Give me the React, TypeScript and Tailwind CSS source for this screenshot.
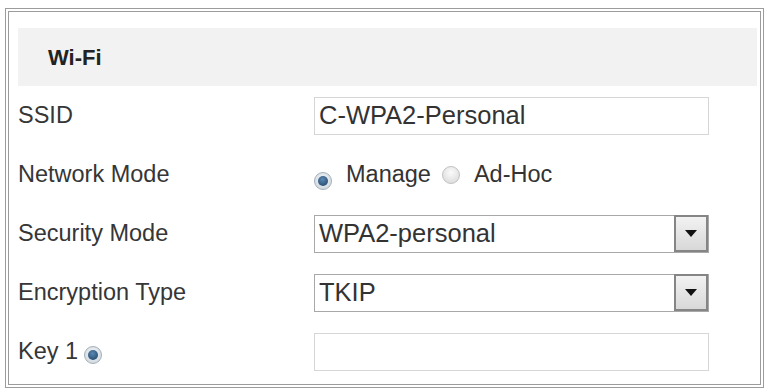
import React from "react";

// Radio dot as drawn by the old web UI skin
const Radio = ({ checked }: { checked?: boolean }) => (
  <span
    className={`inline-flex items-center justify-center w-[18px] h-[18px] rounded-full border ${
      checked
        ? "border-[#a3afba] bg-[radial-gradient(circle_at_50%_40%,#f4f6f8,#c9d2da)]"
        : "border-[#c2c2c2] bg-[radial-gradient(circle_at_50%_35%,#fbfbfb,#d6d6d6)]"
    }`}
  >
    {checked && (
      <span className="w-[10px] h-[10px] rounded-full bg-[radial-gradient(circle_at_45%_35%,#5a88b3,#1d3f60)]" />
    )}
  </span>
);

const TextBox = ({ value }: { value?: string }) => (
  <div className="w-[395px] h-[38px] border border-[#d6d6d6] bg-white flex items-center pl-[4px] text-[25.5px] text-[#333] leading-none">
    {value}
  </div>
);

const SelectBox = ({ value }: { value: string }) => (
  <div className="w-[395px] h-[38px] border border-[#a8a8a8] bg-white flex items-center text-[25.5px] text-[#333] leading-none">
    <span className="flex-1 pl-[4px]">{value}</span>
    <span className="w-[34px] h-[37px] border-[2px] border-[#858585] bg-[linear-gradient(#f2f2f2,#d8d8d8)] flex items-center justify-center">
      <svg width="12" height="7" viewBox="0 0 12 7">
        <path d="M0 0 L12 0 L6 7 Z" fill="#111" />
      </svg>
    </span>
  </div>
);

const Row = ({ label, children }: { label: React.ReactNode; children: React.ReactNode }) => (
  <div className="h-[59px] flex items-center">
    <div className="w-[296px] text-[23.5px] text-[#363636] leading-none flex items-center">{label}</div>
    {children}
  </div>
);

export default function App() {
  return (
    <div
      className="w-[768px] h-[392px] bg-white pl-[5px] pt-[8px] pr-[4px] pb-[4px]"
      style={{ fontFamily: '"Liberation Sans", Arial, sans-serif' }}
    >
      <div className="h-full border-[4px] border-double border-[#9c9c9c] pl-[9px] pr-[3px] pt-[16px]">
        <div className="h-[58px] bg-[#f2f2f2] flex items-center pl-[30px] text-[22px] font-bold text-[#222]">
          Wi-Fi
        </div>
        <Row label="SSID">
          <TextBox value="C-WPA2-Personal" />
        </Row>
        <Row label="Network Mode">
          <div className="flex items-center text-[23.5px] text-[#333] leading-none">
            <span className="mt-[8px]">
              <Radio checked />
            </span>
            <span className="ml-[14px]">Manage</span>
            <span className="ml-[11px] mt-[4px]">
              <Radio />
            </span>
            <span className="ml-[14px]">Ad-Hoc</span>
          </div>
        </Row>
        <Row label="Security Mode">
          <SelectBox value="WPA2-personal" />
        </Row>
        <Row label="Encryption Type">
          <SelectBox value="TKIP" />
        </Row>
        <Row
          label={
            <>
              <span>Key 1</span>
              <span className="ml-[6px] mt-[3px]">
                <Radio checked />
              </span>
            </>
          }
        >
          <TextBox />
        </Row>
      </div>
    </div>
  );
}
